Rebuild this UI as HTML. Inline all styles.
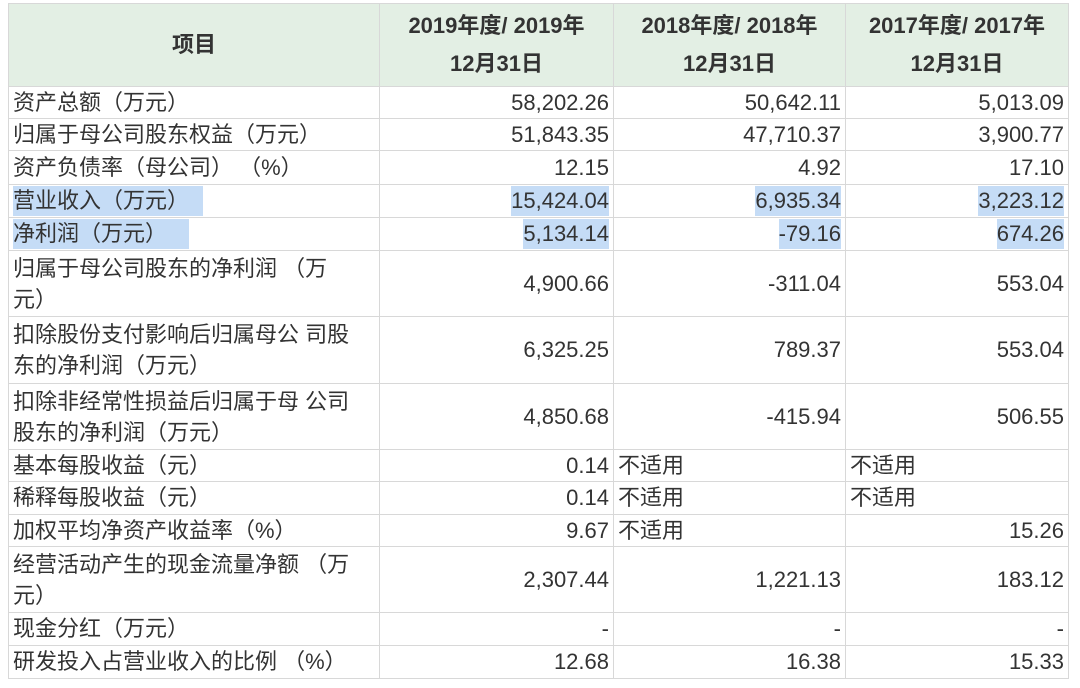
<!DOCTYPE html>
<html><head><meta charset="utf-8"><style>
body{margin:0;background:#fff;width:1080px;height:688px;overflow:hidden}
table{position:absolute;left:8px;top:3px;border-collapse:collapse;table-layout:fixed;font-family:"Liberation Sans","Noto Sans CJK SC",sans-serif;font-size:22px;color:#333}
td,th{border:1.5px solid #d8d8d8;padding:0 4px;line-height:30px;overflow:hidden;white-space:nowrap}
th{background:#e3efe4;font-weight:bold;line-height:38px;font-size:22px}
td.n{text-align:right}
td.l{line-height:31px}
.h{background:#c5dcf6;display:inline-block;line-height:30px}
</style></head><body>
<table>
<colgroup><col style="width:371px"><col style="width:234px"><col style="width:232px"><col style="width:223px"></colgroup>
<tr style="height:83px"><th>项目</th><th>2019年度/ 2019年<br>12月31日</th><th>2018年度/ 2018年<br>12月31日</th><th>2017年度/ 2017年<br>12月31日</th></tr>
<tr style="height:32px"><td>资产总额（万元）</td><td class="n">58,202.26</td><td class="n">50,642.11</td><td class="n">5,013.09</td></tr>
<tr style="height:32px"><td>归属于母公司股东权益（万元）</td><td class="n">51,843.35</td><td class="n">47,710.37</td><td class="n">3,900.77</td></tr>
<tr style="height:34px"><td>资产负债率（母公司） （%）</td><td class="n">12.15</td><td class="n">4.92</td><td class="n">17.10</td></tr>
<tr style="height:33px"><td><span class="h" style="padding-right:14px">营业收入（万元）</span></td><td class="n"><span class="h">15,424.04</span></td><td class="n"><span class="h">6,935.34</span></td><td class="n"><span class="h">3,223.12</span></td></tr>
<tr style="height:33px"><td><span class="h" style="padding-right:22px">净利润（万元）</span></td><td class="n"><span class="h">5,134.14</span></td><td class="n"><span class="h">-79.16</span></td><td class="n"><span class="h">674.26</span></td></tr>
<tr style="height:66px"><td class="l">归属于母公司股东的净利润 （万<br>元）</td><td class="n">4,900.66</td><td class="n">-311.04</td><td class="n">553.04</td></tr>
<tr style="height:67px"><td class="l">扣除股份支付影响后归属母公 司股<br>东的净利润（万元）</td><td class="n">6,325.25</td><td class="n">789.37</td><td class="n">553.04</td></tr>
<tr style="height:66px"><td class="l">扣除非经常性损益后归属于母 公司<br>股东的净利润（万元）</td><td class="n">4,850.68</td><td class="n">-415.94</td><td class="n">506.55</td></tr>
<tr style="height:32px"><td>基本每股收益（元）</td><td class="n">0.14</td><td>不适用</td><td>不适用</td></tr>
<tr style="height:33px"><td>稀释每股收益（元）</td><td class="n">0.14</td><td>不适用</td><td>不适用</td></tr>
<tr style="height:32px"><td>加权平均净资产收益率（%）</td><td class="n">9.67</td><td>不适用</td><td class="n">15.26</td></tr>
<tr style="height:66px"><td class="l">经营活动产生的现金流量净额 （万<br>元）</td><td class="n">2,307.44</td><td class="n">1,221.13</td><td class="n">183.12</td></tr>
<tr style="height:33px"><td>现金分红（万元）</td><td class="n">-</td><td class="n">-</td><td class="n">-</td></tr>
<tr style="height:33px"><td>研发投入占营业收入的比例 （%）</td><td class="n">12.68</td><td class="n">16.38</td><td class="n">15.33</td></tr>
</table>
</body></html>
